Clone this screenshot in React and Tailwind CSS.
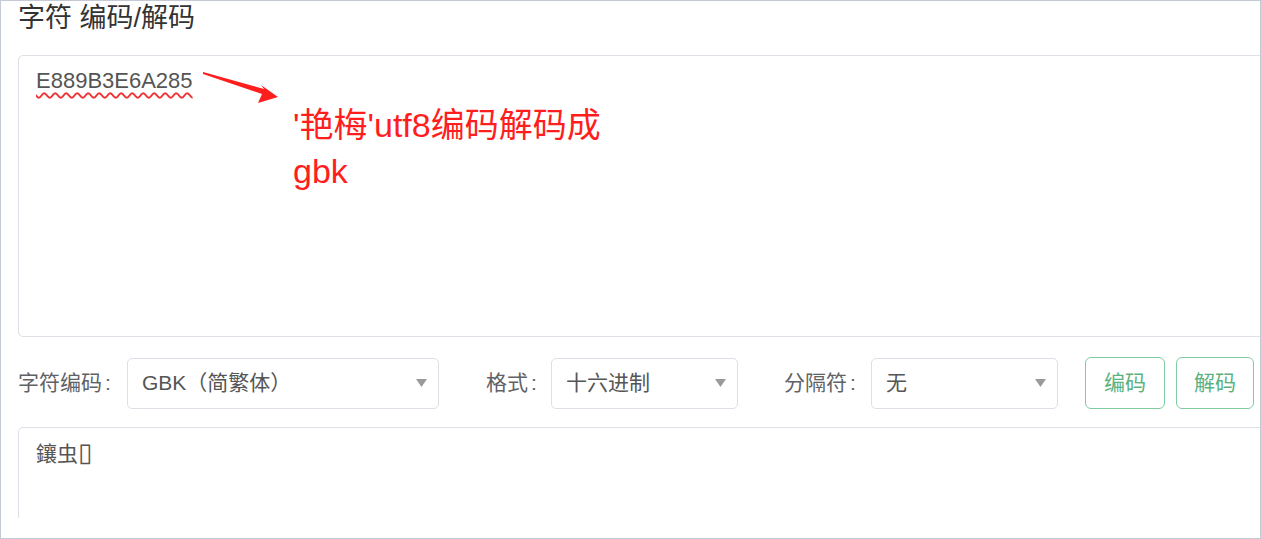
import React from "react";

const font = { fontFamily: '"Liberation Sans", "Noto Sans CJK SC", sans-serif' };

function Caret() {
  return (
    <svg width="11" height="8" viewBox="0 0 11 8" className="shrink-0">
      <polygon points="0,0 11,0 5.5,8" fill="#9a9a9a" />
    </svg>
  );
}

function Select({ w, text }) {
  return (
    <div className={`${w} h-[51px] border border-[#dcdfe6] rounded-[5px] flex items-center justify-between pl-[14px] pr-[11px] bg-white`}>
      <span className="text-[21px] text-[#555]">{text}</span>
      <Caret />
    </div>
  );
}

export default function App() {
  return (
    <div className="w-[1261px] h-[539px] border border-[#c3cad5] bg-white overflow-hidden" style={font}>
      <div className="h-[517px] overflow-hidden pl-[17px] relative">
        <div className="h-[54px] text-[27px] leading-[34px] text-[#333]">字符 编码/解码</div>
        <div className="w-[1300px] h-[282px] border border-[#dcdfe6] rounded-[5px] px-[17px] pt-[9px]">
          <span className="text-[22px] leading-[32px] text-[#555] underline decoration-wavy decoration-[#ee3333] decoration-[1.5px] underline-offset-[4px]">
            E889B3E6A285
          </span>
          <div className="mt-[5px] ml-[257px] text-[34px] leading-[46px] text-[#ff1e1e]">
            <div>'艳梅'utf8编码解码成</div>
            <div>gbk</div>
          </div>
        </div>
        <div className="flex items-center mt-[20px] h-[52px]">
          <span className="text-[21px] text-[#606266] w-[109px]">字符编码<span className="ml-[3px]">:</span></span>
          <Select w="w-[312px]" text="GBK（简繁体）" />
          <span className="text-[21px] text-[#606266] ml-[47px] w-[65px]">格式<span className="ml-[3px]">:</span></span>
          <Select w="w-[187px]" text="十六进制" />
          <span className="text-[21px] text-[#606266] ml-[46px] w-[87px]">分隔符<span className="ml-[3px]">:</span></span>
          <Select w="w-[187px]" text="无" />
          <button className="ml-[27px] w-[80px] h-[52px] border border-[#7fcca0] rounded-[6px] text-[21px] text-[#5bb27f] bg-white">编码</button>
          <button className="ml-[11px] w-[78px] h-[52px] border border-[#7fcca0] rounded-[6px] text-[21px] text-[#5bb27f] bg-white">解码</button>
        </div>
        <div className="w-[1300px] h-[200px] mt-[18px] border border-[#dcdfe6] rounded-[5px] px-[17px] pt-[10px]">
          <span className="text-[21px] leading-[32px] text-[#555]">鑲虫<span style={{ fontFamily: '"DejaVu Sans", sans-serif' }} className="text-[26px] leading-[20px]">▯</span></span>
        </div>
        <svg className="absolute left-0 top-0 pointer-events-none" width="300" height="120" viewBox="0 0 300 120">
          <polygon points="202,71 263,88 260,84 277,96 257,102 261,93 202,73" fill="#ff1e1e" />
        </svg>
      </div>
    </div>
  );
}
